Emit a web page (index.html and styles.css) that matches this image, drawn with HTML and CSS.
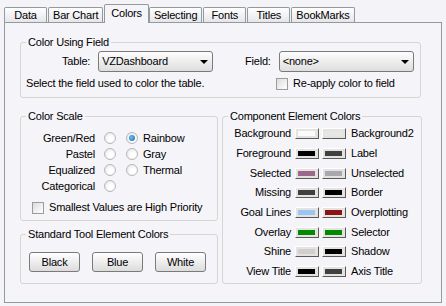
FILE: index.html
```html
<!DOCTYPE html>
<html lang="en">
<head>
    <meta charset="UTF-8">
    <link rel="stylesheet" href="styles.css">
</head>
<body>
    <div class="dialog">
        <div class="tabs">
            <div class="tab">Data</div>
            <div class="tab">Bar Chart</div>
            <div class="tab active">Colors</div>
            <div class="tab">Selecting</div>
            <div class="tab">Fonts</div>
            <div class="tab">Titles</div>
            <div class="tab">BookMarks</div>
        </div>

        <div class="page">
            <!-- Color Using Field -->
            <fieldset class="group group-field">
                <legend>Color Using Field</legend>
                <div class="field-cols">
                    <div class="field-left">
                        <div class="field-row table-row">
                            <span class="field-label">Table:</span>
                            <div class="combo combo-table"><span>VZDashboard</span><span class="arrow"></span></div>
                        </div>
                        <div class="hint">Select the field used to color the table.</div>
                    </div>
                    <div class="field-right">
                        <div class="field-row">
                            <span class="field-label">Field:</span>
                            <div class="combo combo-field"><span>&lt;none&gt;</span><span class="arrow"></span></div>
                        </div>
                        <div class="check-row reapply"><span class="checkbox"></span>Re-apply color to field</div>
                    </div>
                </div>
            </fieldset>

            <div class="columns">
                <div class="col-left">
                    <!-- Color Scale -->
                    <fieldset class="group group-scale">
                        <legend>Color Scale</legend>
                        <div class="scale-row">
                            <span class="scale-label">Green/Red</span>
                            <span class="radio"></span>
                            <span class="radio checked"></span>
                            <span class="scale-name">Rainbow</span>
                        </div>
                        <div class="scale-row">
                            <span class="scale-label">Pastel</span>
                            <span class="radio"></span>
                            <span class="radio"></span>
                            <span class="scale-name">Gray</span>
                        </div>
                        <div class="scale-row">
                            <span class="scale-label">Equalized</span>
                            <span class="radio"></span>
                            <span class="radio"></span>
                            <span class="scale-name">Thermal</span>
                        </div>
                        <div class="scale-row">
                            <span class="scale-label">Categorical</span>
                            <span class="radio"></span>
                        </div>
                        <div class="check-row priority"><span class="checkbox"></span>Smallest Values are High Priority</div>
                    </fieldset>

                    <!-- Standard Tool Element Colors -->
                    <fieldset class="group group-tool">
                        <legend>Standard Tool Element Colors</legend>
                        <div class="tool-buttons">
                            <button type="button" class="btn">Black</button>
                            <button type="button" class="btn">Blue</button>
                            <button type="button" class="btn">White</button>
                        </div>
                    </fieldset>
                </div>

                <!-- Component Element Colors -->
                <fieldset class="group group-component">
                    <legend>Component Element Colors</legend>
                    <div class="comp-row">
                        <span class="comp-label">Background</span>
                        <span class="swatch"><span class="swatch-fill" style="background:#fbfbfb"></span></span>
                        <span class="swatch"><span class="swatch-fill" style="background:#e6e6e6"></span></span>
                        <span class="comp-name">Background2</span>
                    </div>
                    <div class="comp-row">
                        <span class="comp-label">Foreground</span>
                        <span class="swatch"><span class="swatch-fill" style="background:#000000"></span></span>
                        <span class="swatch"><span class="swatch-fill" style="background:#404040"></span></span>
                        <span class="comp-name">Label</span>
                    </div>
                    <div class="comp-row">
                        <span class="comp-label">Selected</span>
                        <span class="swatch"><span class="swatch-fill" style="background:#9a6888"></span></span>
                        <span class="swatch"><span class="swatch-fill" style="background:#a8a8ae"></span></span>
                        <span class="comp-name">Unselected</span>
                    </div>
                    <div class="comp-row">
                        <span class="comp-label">Missing</span>
                        <span class="swatch"><span class="swatch-fill" style="background:#404040"></span></span>
                        <span class="swatch"><span class="swatch-fill" style="background:#000000"></span></span>
                        <span class="comp-name">Border</span>
                    </div>
                    <div class="comp-row">
                        <span class="comp-label">Goal Lines</span>
                        <span class="swatch"><span class="swatch-fill" style="background:#99c6f4"></span></span>
                        <span class="swatch"><span class="swatch-fill" style="background:#8a1414"></span></span>
                        <span class="comp-name">Overplotting</span>
                    </div>
                    <div class="comp-row">
                        <span class="comp-label">Overlay</span>
                        <span class="swatch"><span class="swatch-fill" style="background:#008a00"></span></span>
                        <span class="swatch"><span class="swatch-fill" style="background:#008a00"></span></span>
                        <span class="comp-name">Selector</span>
                    </div>
                    <div class="comp-row">
                        <span class="comp-label">Shine</span>
                        <span class="swatch"><span class="swatch-fill" style="background:#d2d0ce"></span></span>
                        <span class="swatch"><span class="swatch-fill" style="background:#000000"></span></span>
                        <span class="comp-name">Shadow</span>
                    </div>
                    <div class="comp-row">
                        <span class="comp-label">View Title</span>
                        <span class="swatch"><span class="swatch-fill" style="background:#000000"></span></span>
                        <span class="swatch"><span class="swatch-fill" style="background:#404040"></span></span>
                        <span class="comp-name">Axis Title</span>
                    </div>
                </fieldset>
            </div>
        </div>
    </div>
</body>
</html>
```

FILE: styles.css
```css
:root {
    --face: #f5f4f8;
    --tab-border: #919b9c;
    --group-border: #d6d5cf;
    --text: #000000;
}

body {
    margin: 0;
    background: #f4f3f7;
    font-family: "Liberation Sans", Arial, sans-serif;
    font-size: 11px;
    line-height: 13px;
    letter-spacing: -0.2px;
    color: var(--text);
}

.dialog {
    width: 446px;
    height: 306px;
}

/* tabs */
.tabs {
    display: flex;
    align-items: flex-end;
    height: 22px;
    padding-left: 4px;
}

.tab {
    min-width: 43px;
    box-sizing: border-box;
    height: 15px;
    line-height: 15px;
    padding: 0 4px;
    text-align: center;
    border: 1px solid var(--tab-border);
    border-bottom: none;
    border-radius: 2px 2px 0 0;
    background: linear-gradient(#ffffff, #e6e5e9);
    margin-right: 1px;
}

.tab.active {
    position: relative;
    z-index: 1;
    height: 19px;
    line-height: 17px;
    margin: 0 0 -1px 0;
    padding: 0 6px;
    background: var(--face);
}

.page {
    margin: 0 4px 0 4px;
    height: 281px;
    box-sizing: border-box;
    border: 1px solid var(--tab-border);
    background: var(--face);
    padding: 13px 20px 0 15px;
}

/* group boxes */
.group {
    margin: 0;
    border: 1px solid var(--group-border);
    border-radius: 3px;
    padding: 2px 6px 7px 5px;
    min-width: 0;
}

.group legend {
    padding: 0 2px;
    line-height: 13px;
}

.field-cols {
    display: flex;
}

.field-left {
    width: 219px;
}

.field-row {
    display: flex;
    align-items: center;
    height: 21px;
}

.table-row {
    padding-left: 36px;
}

.field-label {
    margin-right: 8px;
}

.combo {
    display: flex;
    align-items: center;
    justify-content: space-between;
    box-sizing: border-box;
    height: 21px;
    padding: 0 4px 0 3px;
    border: 1px solid #7a7a7a;
    border-radius: 3px;
    background: linear-gradient(#fdfdfd, #dedede);
}

.combo-table {
    width: 115px;
}

.combo-field {
    width: 135px;
}

.arrow {
    width: 0;
    height: 0;
    border-left: 4px solid transparent;
    border-right: 4px solid transparent;
    border-top: 4px solid #000;
}

.hint {
    margin-top: 5px;
}

.check-row {
    display: flex;
    align-items: center;
    height: 13px;
}

.reapply {
    margin-top: 5px;
    padding-left: 31px;
}

.checkbox {
    width: 12px;
    height: 12px;
    box-sizing: border-box;
    border: 1px solid #9c9c9c;
    background: linear-gradient(135deg, #dcdcdc, #ffffff);
    margin-right: 5px;
}

/* columns below */
.columns {
    display: grid;
    grid-template-columns: 198px 200px;
    column-gap: 4px;
    margin-top: 12px;
}

.col-left {
    display: flex;
    flex-direction: column;
}

.group-scale {
    padding-top: 7px;
    padding-bottom: 6px;
}

.scale-row {
    display: flex;
    align-items: center;
    height: 16px;
}

.scale-label {
    width: 69px;
    text-align: right;
    margin-right: 9px;
}

.radio {
    position: relative;
    width: 12px;
    height: 12px;
    box-sizing: border-box;
    border: 1px solid #b8b8b8;
    border-radius: 50%;
    background: radial-gradient(circle at 60% 60%, #ffffff 30%, #dedede);
    margin-right: 10px;
}

.radio + .radio {
    margin-right: 5px;
}

.radio.checked::after {
    content: "";
    position: absolute;
    left: 2px;
    top: 2px;
    width: 6px;
    height: 6px;
    border-radius: 50%;
    background: radial-gradient(circle at 40% 40%, #6ec0f5, #1060b0);
}

.priority {
    margin-top: 7px;
    padding-left: 6px;
}

.group-tool {
    margin-top: 7px;
    padding-top: 11px;
    padding-bottom: 11px;
}

.tool-buttons {
    display: flex;
    justify-content: center;
    gap: 12px;
    padding-right: 2px;
}

.btn {
    width: 51px;
    height: 20px;
    padding: 0;
    border: 1px solid #7a7a7a;
    border-radius: 3px;
    background: linear-gradient(#ffffff, #dcdcdc);
    font-family: inherit;
    font-size: 11px;
    letter-spacing: inherit;
    color: var(--text);
}

.group-component {
    padding: 1px 4px 0 5px;
}

.comp-row {
    display: flex;
    align-items: center;
    height: 19.7px;
}

.comp-label {
    width: 63px;
    text-align: right;
    margin-right: 4px;
    white-space: nowrap;
}

.swatch {
    display: flex;
    width: 24px;
    height: 11px;
    box-sizing: border-box;
    padding: 2px 3px 2px 2px;
    border: 1px solid;
    border-color: #ffffff #5a5a5a #5a5a5a #ffffff;
    background: #e4e3df;
    margin-right: 3px;
}

.swatch + .swatch {
    margin-right: 5px;
}

.swatch-fill {
    flex: 1;
}
```
